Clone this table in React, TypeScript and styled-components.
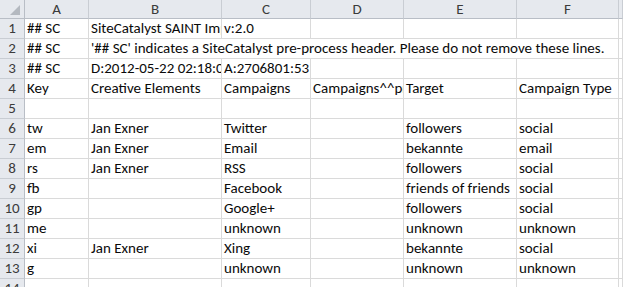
import React from "react";
import styled, { createGlobalStyle } from "styled-components";

const GlobalStyle = createGlobalStyle`
  html, body { margin: 0; padding: 0; background: #fff; overflow: hidden; }
  body { width: 623px; height: 287px; }
`;

const FONT = `"Carlito", "Lato", "Liberation Sans", sans-serif`;

const Sheet = styled.div`
  display: grid;
  grid-template-columns: 25px 64px 133px 89px 93px 113px 102px 1fr;
  grid-template-rows: 19px;
  grid-auto-rows: 20px;
  width: 623px;
  font-family: ${FONT};
  font-size: 15px;
`;

const Corner = styled.div`
  background: #e6e9ee;
  border-right: 1px solid #b9bec6;
  border-bottom: 1px solid #b9bec6;
  display: flex;
  align-items: flex-end;
  justify-content: flex-end;
  padding: 0 4px 3px 0;
  box-sizing: border-box;
`;

const ColHead = styled.div`
  background: #e6e9ee;
  border-right: 1px solid #c9cdd3;
  border-bottom: 1px solid #b9bec6;
  box-sizing: border-box;
  color: #3b3b3b;
  text-align: center;
  line-height: 18px;
  overflow: hidden;
  white-space: nowrap;
`;

const RowHead = styled.div`
  background: #e6e9ee;
  border-right: 1px solid #b9bec6;
  border-bottom: 1px solid #c9cdd3;
  box-sizing: border-box;
  color: #3b3b3b;
  text-align: center;
  line-height: 19px;
  white-space: nowrap;
`;

const Cell = styled.div<{ $span?: number }>`
  grid-column: span ${(p) => p.$span ?? 1};
  border-right: 1px solid #dadada;
  border-bottom: 1px solid #dadada;
  box-sizing: border-box;
  color: #0a0a0a;
  line-height: 19px;
  padding-left: 2px;
  white-space: nowrap;
  overflow: hidden;
`;

const cols = ["A", "B", "C", "D", "E", "F", ""];

type Row = (string | { t: string; span: number })[];

const rows: Row[] = [
  ["## SC", "SiteCatalyst SAINT Import File", "v:2.0", "", "", "", ""],
  [
    "## SC",
    {
      t: "'## SC' indicates a SiteCatalyst pre-process header. Please do not remove these lines.",
      span: 5,
    },
    "",
  ],
  ["## SC", "D:2012-05-22 02:18:09", "A:2706801:53", "", "", "", ""],
  ["Key", "Creative Elements", "Campaigns", "Campaigns^^product", "Target", "Campaign Type", ""],
  ["", "", "", "", "", "", ""],
  ["tw", "Jan Exner", "Twitter", "", "followers", "social", ""],
  ["em", "Jan Exner", "Email", "", "bekannte", "email", ""],
  ["rs", "Jan Exner", "RSS", "", "followers", "social", ""],
  ["fb", "", "Facebook", "", "friends of friends", "social", ""],
  ["gp", "", "Google+", "", "followers", "social", ""],
  ["me", "", "unknown", "", "unknown", "unknown", ""],
  ["xi", "Jan Exner", "Xing", "", "bekannte", "social", ""],
  ["g", "", "unknown", "", "unknown", "unknown", ""],
  ["", "", "", "", "", "", ""],
];

export default function App() {
  return (
    <>
      <GlobalStyle />
      <Sheet>
        <Corner>
          <svg width="10" height="10" viewBox="0 0 10 10">
            <polygon points="0,10 10,10 10,0" fill="#b4b9c0" />
          </svg>
        </Corner>
        {cols.map((c, i) => (
          <ColHead key={i}>{c}</ColHead>
        ))}
        {rows.map((r, ri) => (
          <React.Fragment key={ri}>
            <RowHead>{ri + 1}</RowHead>
            {r.map((c, ci) =>
              typeof c === "string" ? (
                <Cell key={ci}>{c}</Cell>
              ) : (
                <Cell key={ci} $span={c.span}>
                  {c.t}
                </Cell>
              )
            )}
          </React.Fragment>
        ))}
      </Sheet>
    </>
  );
}
